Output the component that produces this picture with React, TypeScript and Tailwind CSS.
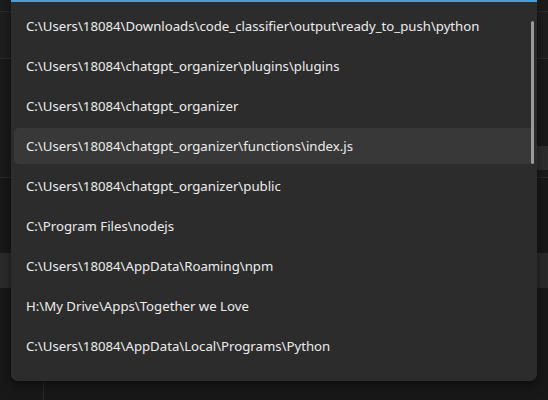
import React from "react";

const paths = [
  "C:\\Users\\18084\\Downloads\\code_classifier\\output\\ready_to_push\\python",
  "C:\\Users\\18084\\chatgpt_organizer\\plugins\\plugins",
  "C:\\Users\\18084\\chatgpt_organizer",
  "C:\\Users\\18084\\chatgpt_organizer\\functions\\index.js",
  "C:\\Users\\18084\\chatgpt_organizer\\public",
  "C:\\Program Files\\nodejs",
  "C:\\Users\\18084\\AppData\\Roaming\\npm",
  "H:\\My Drive\\Apps\\Together we Love",
  "C:\\Users\\18084\\AppData\\Local\\Programs\\Python",
];

export default function App() {
  const active = 3;

  return (
    <div
      className="relative w-[548px] h-[400px] overflow-hidden bg-[#191919]"
      style={{ fontFamily: '"Noto Sans", "Open Sans", sans-serif' }}
    >
      {/* Background window, mostly hidden behind the dropdown */}
      <div className="flex flex-col h-full">
        <div className="h-[11px] bg-[#1c1c1c]" />
        <div className="h-[47px] border-t border-[#2c2c2c] bg-[#1e1e1e]" />
        <div className="h-[119px] border-t border-[#2c2c2c] bg-[#1a1a1a]" />
        <div className="h-[76px] border-t border-[#2a2a2a] bg-[#181818]" />
        <div className="h-[35px] bg-[#2b2b2b]" />
        <div className="flex-1 bg-[#181818] pl-[43px]">
          <div className="w-px h-full bg-[#2a2a2a]" />
        </div>
      </div>
      <div className="absolute right-0 top-[146px] w-[11px] h-[24px] bg-[#2e2e2e]" />

      {/* Dropdown */}
      <div className="absolute left-[11px] top-0 w-[526px] h-[381px] rounded-b-[7px] bg-[#2c2c2c] shadow-[0_4px_12px_rgba(0,0,0,0.5)]">
        <div className="h-[2px] bg-[#4a9fd8]" />
        <div className="relative flex flex-col pt-[4px] px-[3px]">
          {paths.map((p, i) => (
            <div key={i} className="h-[40px] py-[2px]">
              <div
                className={`h-[36px] flex items-center pl-[12px] pt-[2px] rounded-[5px] text-[13.2px] text-[#ececec] ${
                  i === active ? "bg-[#383838]" : ""
                }`}
              >
                {p}
              </div>
            </div>
          ))}
          {/* scrollbar */}
          <div className="absolute right-[3px] top-[19px] w-[3px] h-[143px] rounded-full bg-[#9a9a9a]" />
        </div>
      </div>
    </div>
  );
}
